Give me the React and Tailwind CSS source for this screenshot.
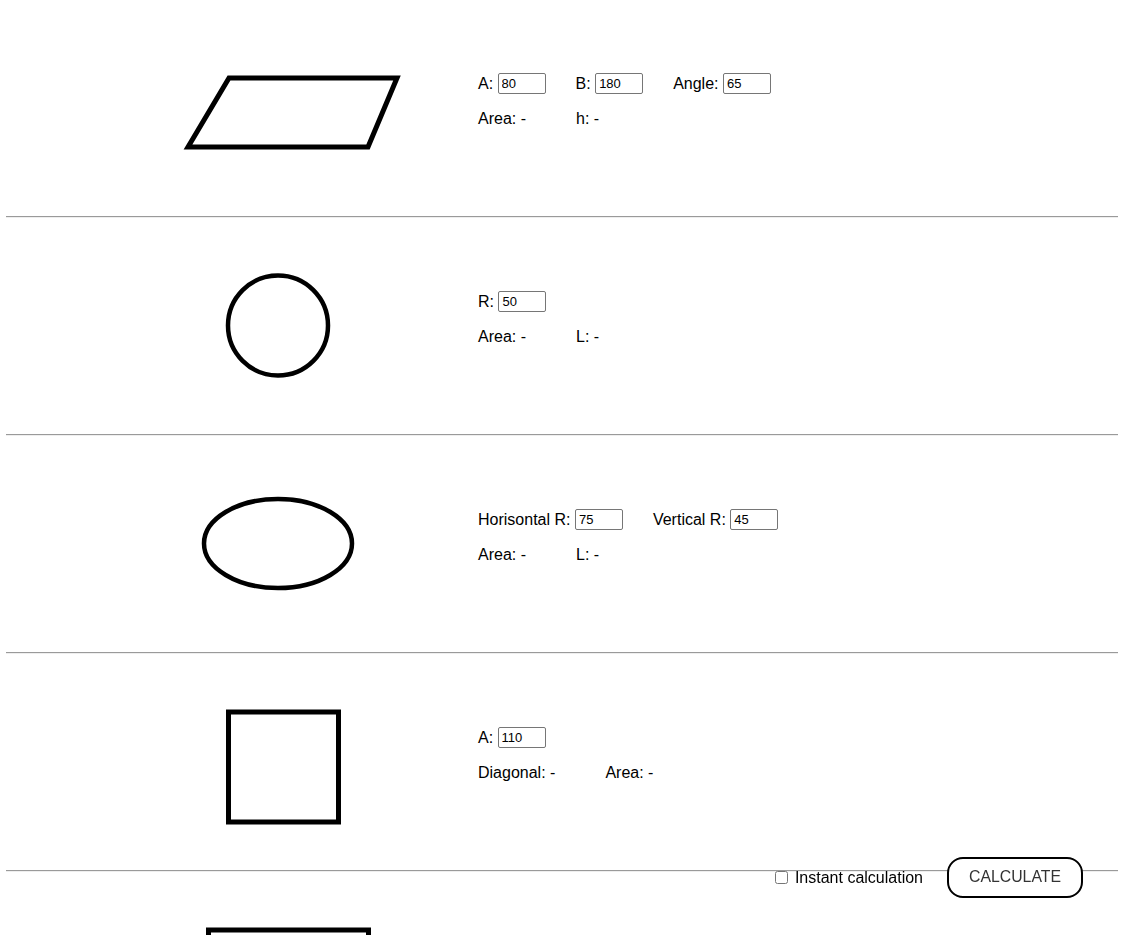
import React, { useState } from 'react';

// Input field group: label + small numeric input
const Field = ({ label, value }) => (
  <div className="flex items-center mr-[30px]">
    <span>{label}:&nbsp;</span>
    <input
      type="text"
      defaultValue={value}
      className="w-[48px] h-[21px] border border-[#767676] rounded-[2px] px-[3px] text-[13px] leading-none text-black bg-white"
    />
  </div>
);

const Result = ({ label }) => (
  <span className="mr-[50px]">{label}: -</span>
);

const Divider = () => (
  <div className="border-t border-t-[#9a9a9a] border-b border-b-[#eeeeee]" />
);

// One calculator row: shape on the left, inputs and results on the right
const ShapeRow = ({ shape, fields, results }) => (
  <div className="flex h-[216px]">
    <svg width="472" height="216" className="shrink-0">
      {shape}
    </svg>
    {fields.length > 0 && (
      <div className="flex flex-col pt-[73px]">
        <div className="flex items-center h-[21px]">
          {fields.map(f => (
            <Field key={f.label} label={f.label} value={f.value} />
          ))}
        </div>
        <div className="flex mt-[16px] leading-[18px]">
          {results.map(r => (
            <Result key={r} label={r} />
          ))}
        </div>
      </div>
    )}
  </div>
);

const App = () => {
  const [instant, setInstant] = useState(false);

  const rows = [
    {
      shape: (
        <polygon
          points="223,78 391,78 362,147 182,147"
          fill="none"
          stroke="black"
          strokeWidth="5"
          strokeLinejoin="miter"
        />
      ),
      fields: [
        { label: 'A', value: '80' },
        { label: 'B', value: '180' },
        { label: 'Angle', value: '65' },
      ],
      results: ['Area', 'h'],
    },
    {
      shape: <circle cx="272" cy="107.5" r="50" fill="none" stroke="black" strokeWidth="4.5" />,
      fields: [{ label: 'R', value: '50' }],
      results: ['Area', 'L'],
    },
    {
      shape: <ellipse cx="272" cy="107.5" rx="74" ry="44.5" fill="none" stroke="black" strokeWidth="4.5" />,
      fields: [
        { label: 'Horisontal R', value: '75' },
        { label: 'Vertical R', value: '45' },
      ],
      results: ['Area', 'L'],
    },
    {
      shape: <rect x="222.5" y="58" width="110" height="110" fill="none" stroke="black" strokeWidth="5" />,
      fields: [{ label: 'A', value: '110' }],
      results: ['Diagonal', 'Area'],
    },
    {
      shape: <rect x="202.5" y="58" width="160" height="90" fill="none" stroke="black" strokeWidth="5" />,
      fields: [],
      results: [],
    },
  ];

  return (
    <div className="pl-[6px] pr-[4px] bg-white text-black text-[16px] font-['Liberation_Sans',Arial,sans-serif]">
      {rows.map((row, i) => (
        <div key={i}>
          <ShapeRow {...row} />
          {i < rows.length - 1 && <Divider />}
        </div>
      ))}

      {/* Floating controls */}
      <div className="fixed right-[39px] bottom-[37px] flex items-center text-[16px]">
        <input
          type="checkbox"
          checked={instant}
          onChange={() => setInstant(!instant)}
          className="m-0 mr-[7px] w-[13px] h-[13px]"
        />
        <span className="mr-[24px]">Instant calculation</span>
        <button
          type="button"
          className="w-[136px] h-[41px] border-2 border-black rounded-[16px] bg-white text-[#333] text-[15.8px] pb-[2px]"
        >
          CALCULATE
        </button>
      </div>
    </div>
  );
};

export default App;
